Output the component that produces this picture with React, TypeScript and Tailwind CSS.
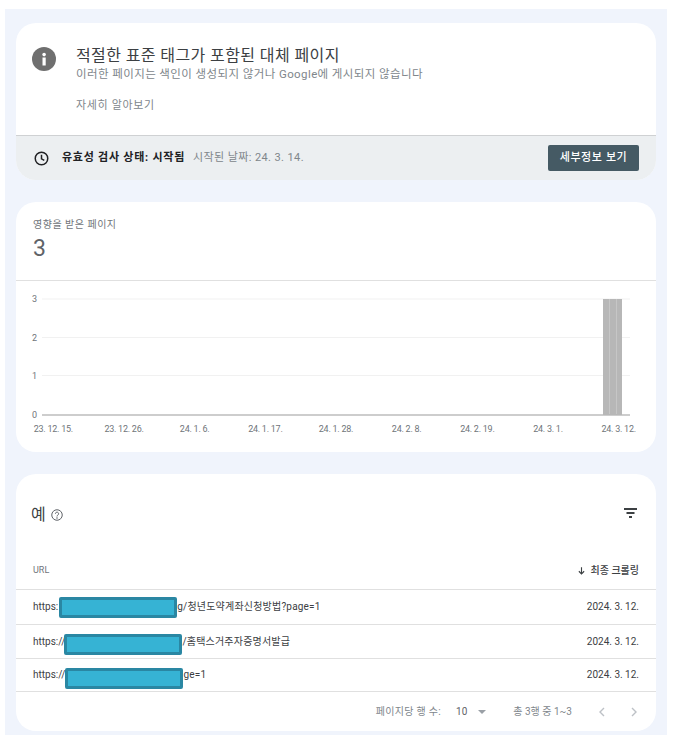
import React from "react";

const font = { fontFamily: '"Roboto", "Noto Sans CJK KR", sans-serif' };
const xLabels = ["23. 12. 15.", "23. 12. 26.", "24. 1. 6.", "24. 1. 17.", "24. 1. 28.", "24. 2. 8.", "24. 2. 19.", "24. 3. 1.", "24. 3. 12."];

function Row({ pre, rest, h, box }: { pre: string; rest: string; h: string; box: string }) {
  return (
    <div className={`flex items-center justify-between px-[17px] pb-[1px] text-[10px] text-[#3c4043] border-t border-[#e0e0e0] ${h}`}>
      <div className="flex items-center">
        <span>{pre}</span>
        <span className={`w-[118px] h-[21px] bg-[#36b3d4] border-[3px] border-[#2a87a3] rounded-[2px] ${box}`} />
        <span className="tracking-[0.2px]">{rest}</span>
      </div>
      <span>2024. 3. 12.</span>
    </div>
  );
}

function Chart() {
  const ys = [[299, "3"], [337.5, "2"], [375.5, "1"]] as const;
  return (
    <svg width="640" height="141" viewBox="16 281 640 141" className="block shrink-0">
      {ys.map(([y, t]) => (
        <g key={t}>
          <line x1="42" x2="630" y1={y} y2={y} stroke="#f1f1f1" strokeWidth="1" />
          <text x="32" y={y + 3} fontSize="9" fill="#70757a" fontFamily="Roboto">{t}</text>
        </g>
      ))}
      <text x="32" y="417.5" fontSize="9" fill="#70757a" fontFamily="Roboto">0</text>
      <rect x="42" y="414" width="588" height="2" fill="#cdcdcd" />
      <rect x="603" y="299" width="19" height="116" fill="#b7b7b7" />
      <rect x="609" y="299" width="1" height="115" fill="#c6c6c6" />
      <rect x="616" y="299" width="1" height="115" fill="#c6c6c6" />
    </svg>
  );
}

export default function App() {
  return (
    <div className="w-[679px] h-[743px] bg-white pt-[9px] pl-[5px] overflow-hidden" style={font}>
      <div className="w-[662px] h-[726px] bg-[#f0f4fc] pt-[14px] px-[11px] flex flex-col gap-[22px]">
        <section className="h-[157px] bg-white rounded-[20px] overflow-hidden flex flex-col">
          <div className="h-[113px] shrink-0 flex pl-[16px] pt-[24px] border-b border-[#cfd1d3]">
            <svg width="24" height="24" viewBox="0 0 24 24" className="shrink-0">
              <circle cx="12" cy="12" r="12" fill="#6f6f6f" />
              <rect x="10.5" y="10.5" width="3.2" height="8" fill="#fff" />
              <circle cx="12.1" cy="7.6" r="1.8" fill="#fff" />
            </svg>
            <div className="ml-[20px] -mt-[1px]">
              <div className="text-[16px] leading-[20px] tracking-[0.4px] text-[#3c4043] h-[20px]">적절한 표준 태그가 포함된 대체 페이지</div>
              <div className="text-[11.5px] leading-[16px] tracking-[0.4px] text-[#80868b]">이러한 페이지는 색인이 생성되지 않거나 Google에 게시되지 않습니다</div>
              <div className="mt-[16px] text-[11px] leading-[16px] tracking-[0.65px] text-[#80868b]">자세히 알아보기</div>
            </div>
          </div>
          <div className="flex-1 bg-[#eceff1] flex items-center pl-[18px] pr-[17px]">
            <svg width="15" height="15" viewBox="0 0 24 24" fill="none" stroke="#202124" strokeWidth="2.4">
              <circle cx="12" cy="12" r="10" />
              <path d="M12 6v6.5l4.5 2.5" />
            </svg>
            <span className="ml-[13px] text-[11px] font-bold tracking-[0.75px] text-[#202124]">유효성 검사 상태: 시작됨</span>
            <span className="ml-[8px] text-[11px] tracking-[0.4px] text-[#80868b]">시작된 날짜: 24. 3. 14.</span>
            <button className="ml-auto w-[91px] h-[26px] -mt-[1px] pt-[2px] bg-[#455a64] rounded-[2px] text-white text-[11px] font-medium tracking-[0.6px]">세부정보 보기</button>
          </div>
        </section>

        <section className="h-[250px] bg-white rounded-[20px] overflow-hidden flex flex-col">
          <div className="h-[79px] shrink-0 pl-[17px] pt-[16px] border-b border-[#e0e0e0]">
            <div className="text-[10px] leading-[14px] tracking-[0.5px] text-[#70757a]">영향을 받은 페이지</div>
            <div className="text-[23px] leading-[26px] mt-[4px] text-[#5f6368]">3</div>
          </div>
          <Chart />
          <div className="grid grid-cols-9 px-[2px] pt-[1px] text-center text-[9px] leading-[12px] -tracking-[0.25px] text-[#70757a]">
            {xLabels.map((l) => <span key={l} className="whitespace-nowrap">{l}</span>)}
          </div>
        </section>

        <section className="h-[257px] bg-white rounded-[20px] overflow-hidden flex flex-col">
          <div className="h-[80px] flex items-center justify-between pl-[15px] pr-[19px] shrink-0">
            <div className="flex items-center gap-[5px] mt-[1px]">
              <span className="text-[16px] text-[#3c4043]">예</span>
              <svg width="12" height="12" viewBox="0 0 24 24" fill="none" stroke="#5f6368" strokeWidth="2">
                <circle cx="12" cy="12" r="10.5" />
                <path d="M8.8 9.5a3.2 3.2 0 1 1 5 2.6c-1.2.8-1.8 1.4-1.8 2.9" />
                <circle cx="12" cy="18" r=".6" fill="#5f6368" />
              </svg>
            </div>
            <svg width="13" height="10" viewBox="0 0 13 10" className="-mt-[2px]">
              <rect x="0" y="0" width="13" height="2" fill="#3c4043" />
              <rect x="2.5" y="4" width="8" height="2" fill="#3c4043" />
              <rect x="5" y="8" width="3" height="2" fill="#3c4043" />
            </svg>
          </div>
          <div className="h-[35px] flex items-center justify-between px-[17px] pb-[3px] shrink-0">
            <span className="text-[9px] text-[#70757a] mt-[2px]">URL</span>
            <div className="flex items-center gap-[5px]">
              <svg width="9" height="9" viewBox="0 0 24 24" fill="none" stroke="#3c4043" strokeWidth="3">
                <path d="M12 3v18M5 14l7 7 7-7" />
              </svg>
              <span className="text-[10px] font-medium text-[#3c4043]">최종 크롤링</span>
            </div>
          </div>
          <Row pre="https:" rest="g/청년도약계좌신청방법?page=1" h="h-[35px]" box="mt-[2px] ml-[1px]" />
          <Row pre="https://" rest="/홈택스거주자증명서발급" h="h-[34px]" box="mt-[6px] -ml-[1px]" />
          <Row pre="https://" rest="ge=1" h="h-[33px]" box="mt-[7px]" />
          <div className="flex-1 border-t border-[#e0e0e0] flex items-center justify-end pr-[18px] text-[10px] text-[#80868b]">
            <span className="tracking-[0.3px]">페이지당 행 수:</span>
            <span className="ml-[15px] text-[#5f6368]">10</span>
            <svg width="8" height="4" viewBox="0 0 8 4" className="ml-[11px]"><path d="M0 0h8L4 4z" fill="#9aa0a6" /></svg>
            <span className="ml-[27px]">총 3행 중 1~3</span>
            <svg width="8" height="10" viewBox="0 0 8 10" fill="none" stroke="#bdc1c6" strokeWidth="1.4" className="ml-[26px]"><path d="M6 1 2 5l4 4" /></svg>
            <svg width="8" height="10" viewBox="0 0 8 10" fill="none" stroke="#bdc1c6" strokeWidth="1.4" className="ml-[24px]"><path d="m2 1 4 4-4 4" /></svg>
          </div>
        </section>
      </div>
    </div>
  );
}
